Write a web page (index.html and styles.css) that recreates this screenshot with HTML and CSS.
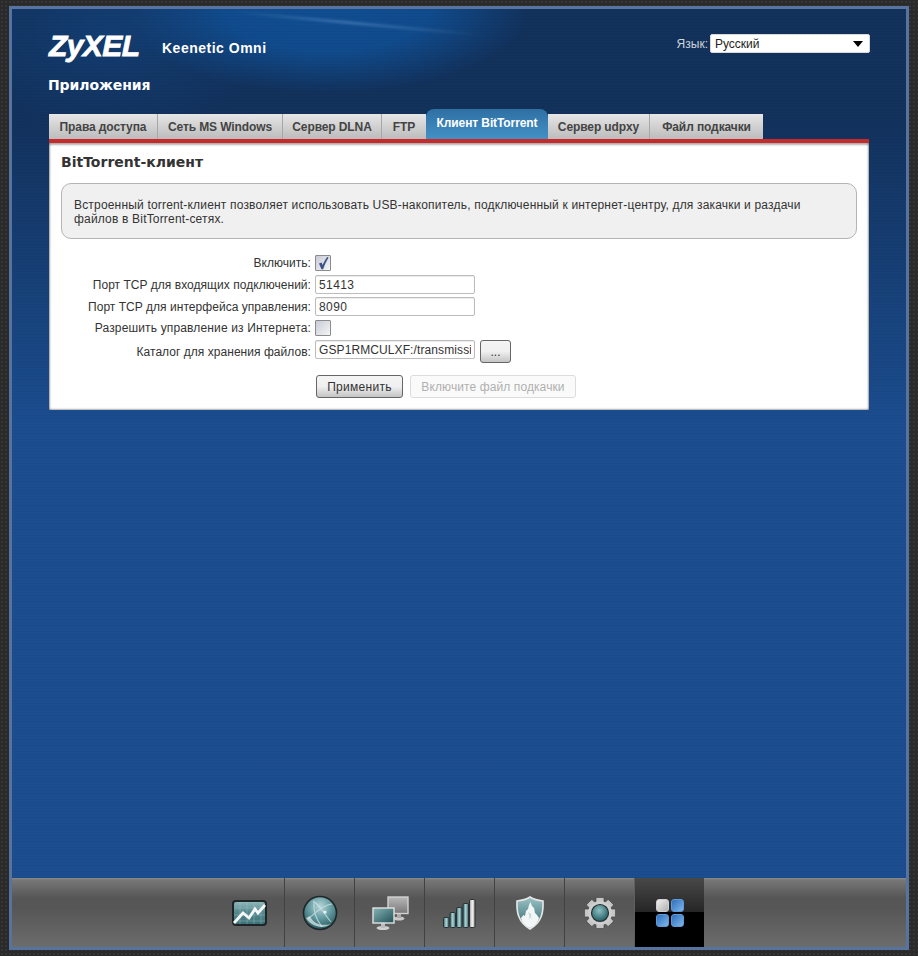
FILE: index.html
```html
<!DOCTYPE html>
<html lang="ru">
<head>
<meta charset="utf-8">
<title>Приложения</title>
<link rel="stylesheet" href="styles.css">
</head>
<body>
<div class="frame">
  <main class="main">
    <header class="header">
      <div class="brand">
        <span class="logo">ZyXEL</span>
        <span class="model">Keenetic Omni</span>
        <div class="lang">
          <label class="lang-label" for="lang">Язык:</label>
          <span class="select-wrap">
            <select id="lang" class="select"><option>Русский</option></select>
          </span>
        </div>
      </div>
      <h1 class="page-title">Приложения</h1>
    </header>
    <nav class="tabs">
      <a class="tab tab-1">Права доступа</a>
      <a class="tab tab-2">Сеть MS Windows</a>
      <a class="tab tab-3">Сервер DLNA</a>
      <a class="tab tab-4">FTP</a>
      <a class="tab tab-active">Клиент BitTorrent</a>
      <a class="tab tab-6">Сервер udpxy</a>
      <a class="tab tab-7">Файл подкачки</a>
    </nav>
    <section class="panel">
      <h2 class="panel-title">BitTorrent-клиент</h2>
      <div class="info">Встроенный torrent-клиент позволяет использовать USB-накопитель, подключенный к интернет-центру, для закачки и раздачи файлов в BitTorrent-сетях.</div>
      <form class="form">
        <span class="label">Включить:</span>
        <span class="check">
          <svg viewBox="0 0 14 14" width="14" height="14"><path d="M3 7.4 L5.6 6.6 L6.6 9 C7.8 6.2 9.2 3.6 11.2 1 L12.6 1.4 C10.4 5 8.6 8.8 7.2 13.2 L5.4 13.2 Z" fill="#3e5088"/></svg>
        </span>
        <label class="label" for="p1">Порт TCP для входящих подключений:</label>
        <input class="input input-num" id="p1" value="51413">
        <label class="label" for="p2">Порт TCP для интерфейса управления:</label>
        <input class="input input-num" id="p2" value="8090">
        <span class="label label-wide">Разрешить управление из Интернета:</span>
        <span class="check"></span>
        <label class="label" for="p3">Каталог для хранения файлов:</label>
        <span class="path-row">
          <input class="input" id="p3" value="GSP1RMCULXF:/transmission">
          <button type="button" class="btn btn-browse">...</button>
        </span>
        <span class="actions">
          <button type="button" class="btn btn-apply">Применить</button>
          <button type="button" class="btn btn-disabled" disabled>Включите файл подкачки</button>
        </span>
      </form>
    </section>
  </main>
  <footer class="footer">
    <div class="dock">
      <a class="dock-item">
        <svg class="ico" viewBox="0 0 40 32" width="40" height="32">
          <defs><linearGradient id="g1" x1="0" y1="0" x2="0" y2="1"><stop offset="0" stop-color="#94bcbe"/><stop offset=".45" stop-color="#55898e"/><stop offset="1" stop-color="#3a6f75"/></linearGradient></defs>
          <rect x="4" y="4" width="33" height="24" rx="3" fill="url(#g1)" stroke="#1d2526" stroke-width="2"/>
          <path d="M11 5v22M18 5v22M25 5v22M32 5v22M5 11h31M5 18h31M5 24h31" stroke="#a9cbcd" stroke-opacity=".35" stroke-width="1"/>
          <path d="M5 26 L14 16 L20 21 L26 12 L29 16 L36 8" fill="none" stroke="#f5f7f7" stroke-width="2.8"/>
        </svg>
      </a>
      <a class="dock-item">
        <svg class="ico" viewBox="0 0 40 40" width="40" height="40">
          <defs><radialGradient id="g2" cx=".5" cy=".3" r=".75"><stop offset="0" stop-color="#b6d6d8"/><stop offset=".5" stop-color="#5e979d"/><stop offset="1" stop-color="#1e4f55"/></radialGradient></defs>
          <circle cx="20" cy="20" r="16.5" fill="url(#g2)" stroke="#1f2627" stroke-width="1.6"/>
          <path d="M13 8 C20 12 25 22 31 29 M8 26 C13 22 22 12 32 11 M14 9 C13 17 16 26 22 34" fill="none" stroke="#d8e8ea" stroke-opacity=".7" stroke-width="1.1"/>
          <path d="M6 25 C11 33 22 37 31 31 C23 33 14 32 10 23 Z" fill="#e3eeef" fill-opacity=".7"/>
          <circle cx="25" cy="19" r="1.6" fill="#e8f2f3"/>
        </svg>
      </a>
      <a class="dock-item">
        <svg class="ico" viewBox="0 0 40 36" width="40" height="36">
          <defs>
            <linearGradient id="g3a" x1="0" y1="0" x2="0" y2="1"><stop offset="0" stop-color="#b8b8b8"/><stop offset="1" stop-color="#787878"/></linearGradient>
            <linearGradient id="g3b" x1="0" y1="0" x2="1" y2="1"><stop offset="0" stop-color="#87b4b6"/><stop offset="1" stop-color="#1f5055"/></linearGradient>
          </defs>
          <ellipse cx="29" cy="23.5" rx="5.5" ry="2" fill="#c8c8c8"/>
          <rect x="27" y="18" width="4" height="5" fill="#aaa"/>
          <rect x="18" y="2" width="20" height="16.5" fill="url(#g3a)" stroke="#d2d2d2" stroke-width="1.4"/>
          <ellipse cx="13" cy="33" rx="6.5" ry="2" fill="#d0d0d0"/>
          <rect x="11" y="28" width="4" height="5" fill="#bbb"/>
          <rect x="3" y="13" width="21" height="15" fill="url(#g3b)" stroke="#e2e2e2" stroke-width="1.4"/>
        </svg>
      </a>
      <a class="dock-item">
        <svg class="ico" viewBox="0 0 34 32" width="34" height="32">
          <defs>
            <linearGradient id="g4" x1="0" y1="0" x2="1" y2="0"><stop offset="0" stop-color="#2f6a70"/><stop offset=".5" stop-color="#b3d5d7"/><stop offset="1" stop-color="#2f6a70"/></linearGradient>
            <linearGradient id="g4b" x1="0" y1="0" x2="1" y2="0"><stop offset="0" stop-color="#9a9a9a"/><stop offset=".5" stop-color="#f4f4f4"/><stop offset="1" stop-color="#a0a0a0"/></linearGradient>
          </defs>
          <g stroke="#2b3132" stroke-width="1">
            <rect x=".5" y="20.5" width="5.5" height="10" rx="1.2" fill="url(#g4)"/>
            <rect x="7" y="15.5" width="5.5" height="15" rx="1.2" fill="url(#g4)"/>
            <rect x="13.5" y="10.5" width="5.5" height="20" rx="1.2" fill="url(#g4)"/>
            <rect x="20" y="6.5" width="5.5" height="24" rx="1.2" fill="url(#g4)"/>
            <rect x="26.5" y="2.5" width="5.5" height="28" rx="1.2" fill="url(#g4b)"/>
          </g>
        </svg>
      </a>
      <a class="dock-item">
        <svg class="ico" viewBox="0 0 30 36" width="30" height="36">
          <defs><linearGradient id="g5" x1="0" y1="0" x2="0" y2="1"><stop offset="0" stop-color="#9cc3c5"/><stop offset="1" stop-color="#2f676d"/></linearGradient></defs>
          <path d="M15 2 C19 4.5 23 5.5 28 6 C28.5 17 27 27 15 34 C3 27 1.5 17 2 6 C7 5.5 11 4.5 15 2 Z" fill="url(#g5)" stroke="#e6e6e6" stroke-width="1.6"/>
          <path d="M15 33 C10 31 7 27 6 23 L8.5 20 L10 21 L11 16 L13 14 L14 10 L15.5 7 L17 11 L19 13 L20 18 L22 20 L24 23 C23 27 20 31 15 33 Z" fill="#f2f6f6"/>
          <path d="M13 17 L14.5 21 L13.5 25 L15.500 22 L16.5 25 L16 19 Z" fill="#c3d8da"/>
        </svg>
      </a>
      <a class="dock-item">
        <svg class="ico" viewBox="0 0 36 36" width="36" height="36">
          <defs><radialGradient id="g6" cx=".45" cy=".35" r=".7"><stop offset="0" stop-color="#8fc0c2"/><stop offset=".7" stop-color="#3a767c"/><stop offset="1" stop-color="#1f4c51"/></radialGradient></defs>
          <g fill="#c6c6c6" stroke="#3a3a3a" stroke-width=".6">
            <rect x="14" y="2.5" width="8" height="6" rx="1"/>
            <rect x="14" y="2.5" width="8" height="6" rx="1" transform="rotate(45 18 18)"/>
            <rect x="14" y="2.5" width="8" height="6" rx="1" transform="rotate(90 18 18)"/>
            <rect x="14" y="2.5" width="8" height="6" rx="1" transform="rotate(135 18 18)"/>
            <rect x="14" y="2.5" width="8" height="6" rx="1" transform="rotate(180 18 18)"/>
            <rect x="14" y="2.5" width="8" height="6" rx="1" transform="rotate(225 18 18)"/>
            <rect x="14" y="2.5" width="8" height="6" rx="1" transform="rotate(270 18 18)"/>
            <rect x="14" y="2.5" width="8" height="6" rx="1" transform="rotate(315 18 18)"/>
          </g>
          <circle cx="18" cy="18" r="12" fill="#cfcfcf"/>
          <circle cx="18" cy="18" r="8.5" fill="url(#g6)" stroke="#2a3233" stroke-width="1.2"/>
        </svg>
      </a>
      <a class="dock-item dock-active">
        <span class="tiles">
          <span class="tile tile-grey"></span>
          <span class="tile"></span>
          <span class="tile"></span>
          <span class="tile"></span>
        </span>
      </a>
    </div>
  </footer>
</div>
</body>
</html>
```
FILE: styles.css
```css
* { box-sizing: border-box; }
html, body { margin: 0; height: 100%; }
body {
  background-color: #2a2a2a;
  background-image: radial-gradient(#353535 1px, transparent 1.2px);
  background-size: 4px 4px;
  font-family: "Liberation Sans", Arial, sans-serif;
  font-size: 12px;
  color: #333;
  padding: 6px 9px;
  overflow: hidden;
}
.frame {
  width: 900px;
  height: 944px;
  border: 3px solid #56749f;
  display: flex;
  flex-direction: column;
}
.main {
  position: relative;
  overflow: hidden;
  flex: 1;
  padding: 0 37px;
  background-color: #1b4d8f;
  background-image:
    repeating-linear-gradient(0deg, rgba(0,0,0,.035) 0 1px, transparent 1px 3px),
    radial-gradient(ellipse 205px 85px at 315px 0, rgba(16,78,146,1) 0, rgba(16,78,146,.9) 50%, rgba(16,78,146,0) 100%),
    radial-gradient(ellipse 170px 110px at 100px 20px, rgba(20,80,150,.4), rgba(20,80,150,0)),
    linear-gradient(180deg, #12315b 0, #12315b 100px, #1b4d8f 415px);
}
.main::before {
  content: "";
  position: absolute;
  left: 221px;
  top: 13px;
  width: 250px;
  height: 3px;
  transform: rotate(5.3deg);
  background: linear-gradient(90deg, rgba(130,175,225,0), rgba(130,175,225,.35) 45%, rgba(130,175,225,0));
  filter: blur(1px);
}
.header { position: relative; height: 100px; color: #fff; }
.brand {
  display: flex;
  align-items: center;
  padding-top: 23px;
  height: 52px;
}
.logo {
  font: italic bold 30px/29px "Liberation Sans", Arial, sans-serif;
  -webkit-text-stroke: .8px #fff;
  width: 113px;
  letter-spacing: -.6px;
  margin-top: -2px;
}
.model {
  font: bold 14px/16px "Liberation Sans", Arial, sans-serif;
  margin-top: 2px;
  letter-spacing: .5px;
}
.lang {
  margin-left: auto;
  margin-right: -1px;
  display: flex;
  align-items: center;
  gap: 2px;
  margin-top: -6px;
}
.lang-label { color: #d0d5dc; font-size: 12px; }
.select-wrap { position: relative; display: block; width: 160px; height: 19px; }
.select-wrap::after {
  content: "";
  position: absolute;
  right: 7px;
  top: 7px;
  border-style: solid;
  border-width: 6px 5px 0;
  border-color: #000 transparent transparent;
}
.select {
  appearance: none;
  width: 100%;
  height: 100%;
  border: 1px solid #d8d8d8;
  border-radius: 2px;
  background: #fff;
  color: #222;
  font: 12px "Liberation Sans", Arial, sans-serif;
  padding: 0 4px;
}
.page-title {
  font: bold 14px/16px "DejaVu Sans", Verdana, sans-serif;
  letter-spacing: -.1px;
  margin: 16px 0 0 -1px;
}
.tabs {
  display: flex;
  align-items: flex-end;
  height: 30px;
}
.tab {
  display: flex;
  align-items: center;
  justify-content: center;
  height: 25px;
  background: linear-gradient(180deg, #e6e6e6, #bcbcbc);
  border-right: 1px solid #a8a8a8;
  color: #444;
  font-weight: bold;
  font-size: 12px;
  letter-spacing: -.1px;
}
.tab-1 { width: 109px; }
.tab-2 { width: 125px; }
.tab-3 { width: 99px; }
.tab-4 { width: 44px; border-right: 0; }
.tab-active {
  width: 122px;
  height: 30px;
  border: 0;
  border-radius: 8px 8px 0 0;
  background: linear-gradient(180deg, #2f6fa3, #4291c6);
  color: #fff;
  padding-bottom: 3px;
}
.tab-6 { width: 102px; }
.tab-7 { width: 113px; border-right: 0; }
.panel {
  height: 271px;
  border-top: 4px solid #c62b2b;
  background: #fff;
  box-shadow: inset 0 2px 2px rgba(0,0,0,.3), inset 2px 0 2px -1px rgba(0,0,0,.3), inset -2px 0 2px -1px rgba(0,0,0,.3), inset 0 -2px 2px -1px rgba(0,0,0,.3);
  padding: 0 12px;
}
.panel-title {
  font: bold 14px/16px "DejaVu Sans", Verdana, sans-serif;
  color: #333;
  margin: 0;
  padding-top: 11px;
  height: 40px;
}
.info {
  height: 56px;
  border: 1px solid #b4b4b4;
  border-radius: 10px;
  background: #f0f0f0;
  color: #333;
  line-height: 14px;
  letter-spacing: .18px;
  padding: 14px 40px 0 12px;
}
.form {
  display: grid;
  grid-template-columns: 250px 1fr;
  column-gap: 4px;
  row-gap: 3px;
  align-items: center;
  margin-top: 15px;
}
.label { text-align: right; white-space: nowrap; color: #333; letter-spacing: .04px; }
.label-wide { letter-spacing: .15px; }
.check {
  width: 16px;
  height: 16px;
  border: 1px solid #8b8b8b;
  border-radius: 1px;
  background: linear-gradient(135deg, #c8cad6, #f6f6f6);
  display: flex;
  align-items: center;
  justify-content: center;
  align-self: center;
}
.form > .check { margin: 1px 0; }
.input {
  width: 160px;
  height: 19px;
  border: 1px solid #bcbcbc;
  border-radius: 2px;
  padding: 0 3px;
  font: 12px "Liberation Sans", Arial, sans-serif;
  letter-spacing: .1px;
  color: #333;
  background: #fff;
  box-shadow: inset 0 1px 1px rgba(0,0,0,.08);
}
.input-num { letter-spacing: .4px; }
.path-row { display: flex; align-items: flex-start; gap: 5px; height: 23px; }
.btn {
  font: 12px "Liberation Sans", Arial, sans-serif;
  color: #333;
  border: 1px solid #666;
  border-radius: 3px;
  background: linear-gradient(180deg, #f4f4f4, #f0f0f0 50%, #c4c4c4);
  padding: 0;
}
.btn-browse { width: 31px; height: 23px; }
.actions {
  grid-column: 2;
  display: flex;
  gap: 7px;
  margin: 9px 0 0 1px;
}
.btn-apply { width: 87px; height: 23px; letter-spacing: .3px; }
.btn-disabled {
  width: 166px;
  height: 23px;
  color: #b0b0b0;
  border-color: #dcdcdc;
  background: #fafafa;
  letter-spacing: .1px;
}
.footer {
  height: 69px;
  background: linear-gradient(180deg, #8c8c8c 0, #777 2px, #565656 20px, #565656 30px, #6c6c6c 100%);
  display: flex;
  justify-content: center;
}
.dock { display: flex; }
.dock-item {
  width: 70px;
  display: flex;
  align-items: center;
  justify-content: center;
  border-left: 1px solid #424242;
}
.dock-item:first-child { border-left: 0; }
.dock-active {
  border-left-color: #5e5e5e;
  background: linear-gradient(180deg, #484848 0, #262626 49%, #000 49%, #000 100%);
  background-clip: padding-box;
}
.tiles {
  display: grid;
  grid-template-columns: 13px 13px;
  grid-template-rows: 13px 13px;
  gap: 2px;
}
.tile {
  border-radius: 3px;
  background: linear-gradient(135deg, #2d6fbb, #7fb6ea);
  border: 1px solid #5f9ad8;
}
.tile-grey {
  background: linear-gradient(135deg, #f0f0f0, #b0b0b0);
  border-color: #d0d0d0;
}
```
